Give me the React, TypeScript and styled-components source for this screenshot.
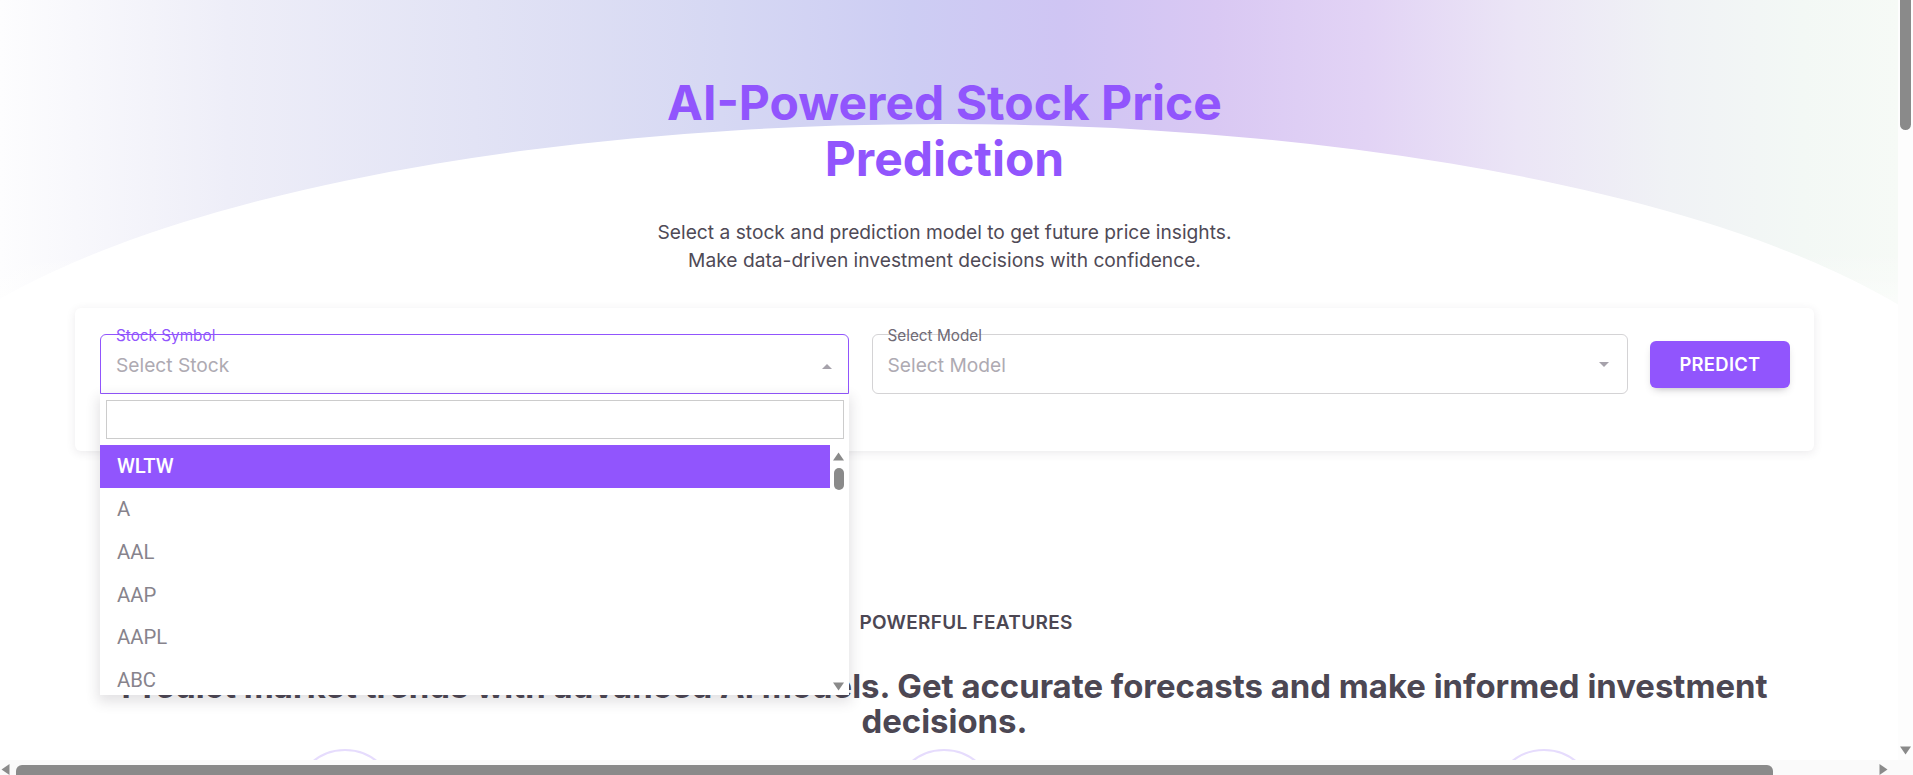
import React from "react";
import styled, { createGlobalStyle } from "styled-components";

const GlobalStyle = createGlobalStyle`
  html, body { margin: 0; padding: 0; }
  body {
    font-family: Inter, "Noto Sans", Arial, sans-serif;
    background: #ffffff;
    color: #3a3541;
  }
  *, *::before, *::after { box-sizing: border-box; }
`;

const Page = styled.div`
  width: calc(100% - 15px);
  display: flex;
  flex-direction: column;
`;

const Hero = styled.section`
  position: relative;
  padding: 75px 84px 0 75px;
  background:
    linear-gradient(180deg, rgba(255,255,255,0) 0%, rgba(255,255,255,0) 70%, #ffffff 100%),
    linear-gradient(90deg, #fdfdfe 0%, #eeeef8 12%, #e2e3f5 25%, #d6d8f3 38%, #cdcdf3 48%, #cfc5f3 56%, #d9c8f3 64%, #e2d3f5 72%, #ebe5f6 80%, #f0f2f5 88%, #f3f8f5 95%, #f6faf6 100%);
  background-size: 100% 360px, 100% 360px;
  background-repeat: no-repeat;

  &::before {
    content: "";
    position: absolute;
    top: 124px;
    left: calc(50% - 1080px);
    width: 2150px;
    height: 670px;
    border-radius: 50%;
    background: #ffffff;
    z-index: 0;
  }
`;

const HeroInner = styled.div`
  position: relative;
  z-index: 2;
  display: flex;
  flex-direction: column;
  align-items: center;
`;

const Title = styled.h1`
  margin: 0;
  max-width: 640px;
  font-size: 48px;
  line-height: 56px;
  font-weight: 700;
  color: #9155fd;
  text-align: center;
`;

const Subtitle = styled.p`
  margin: 30.5px 0 0;
  font-size: 19.2px;
  line-height: 28.8px;
  font-weight: 400;
  color: #4f4a56;
  text-align: center;
`;

const Card = styled.div`
  align-self: stretch;
  margin-top: 33px;
  background: #ffffff;
  border-radius: 6px;
  box-shadow: 0 2px 10px 0 rgba(58, 53, 65, 0.1);
  padding: 26px 24px 57px 25px;
  display: grid;
  grid-template-columns: 749fr 756fr 140px;
  column-gap: 22.5px;
  align-items: center;
`;

const Field = styled.div<{ $focused?: boolean }>`
  position: relative;
  height: 60px;
  border: 1px solid ${(p) => (p.$focused ? "#9155fd" : "rgba(58, 53, 65, 0.22)")};
  border-radius: ${(p) => (p.$focused ? "6px 6px 0 0" : "6px")};
  display: flex;
  align-items: center;
  padding: 0 ${(p) => (p.$focused ? "9px" : "11px")} 0 15px;
`;

const FieldLabel = styled.span<{ $focused?: boolean }>`
  position: absolute;
  top: -7.5px;
  left: 15px;
  font-size: 15.3px;
  line-height: 15.3px;
  color: ${(p) => (p.$focused ? "#9155fd" : "#6f6a75")};
  white-space: nowrap;
`;

const Placeholder = styled.span`
  flex: 1;
  padding-top: 2px;
  font-size: 19.2px;
  color: #aeaab2;
`;

const Caret = styled.svg<{ $dy?: number }>`
  width: 24px;
  height: 24px;
  margin-top: ${(p) => p.$dy ?? 0}px;
  fill: #a6a2ab;
  flex: none;
`;

const Dropdown = styled.div`
  position: absolute;
  top: 100%;
  left: -1px;
  right: -1px;
  margin-top: 1px;
  background: #ffffff;
  box-shadow: 0 5px 12px 2px rgba(58, 53, 65, 0.14);
  padding-top: 6px;
  z-index: 10;
  display: flex;
  flex-direction: column;
`;

const SearchInput = styled.input`
  margin: 0 5px 0 6px;
  height: 39px;
  border: 1px solid #cccccc;
  border-radius: 0;
  outline: none;
  font-family: inherit;
  font-size: 16px;
  padding: 0 8px;
`;

const ListArea = styled.div`
  margin-top: 6px;
  height: 250px;
  display: flex;
`;

const List = styled.ul`
  flex: 1;
  list-style: none;
  margin: 0;
  padding: 0;
  overflow: hidden;
`;

const Option = styled.li<{ $active?: boolean }>`
  height: 42.7px;
  flex: none;
  display: flex;
  align-items: center;
  padding: 0 17px;
  font-family: Roboto, "Liberation Sans", sans-serif;
  font-size: 20.3px;
  font-weight: ${(p) => (p.$active ? 500 : 400)};
  color: ${(p) => (p.$active ? "#ffffff" : "#87838c")};
  background: ${(p) => (p.$active ? "#9155fd" : "transparent")};
`;

const ListScroll = styled.div`
  width: 19px;
  flex: none;
  display: flex;
  flex-direction: column;
  align-items: center;
  padding: 7px 2px 4px 0;
`;

const ListThumb = styled.div`
  width: 10px;
  height: 22px;
  margin-top: 7px;
  border-radius: 5px;
  background: #8a8a8a;
`;

const Spacer = styled.div`
  flex: 1;
`;

const Arrow = styled.svg`
  flex: none;
  fill: #8a8a8a;
`;

const PredictButton = styled.button`
  height: 47px;
  border: none;
  border-radius: 6px;
  background: #9155fd;
  color: #ffffff;
  font-family: inherit;
  font-size: 18.4px;
  font-weight: 600;
  letter-spacing: 0.3px;
  text-transform: uppercase;
  box-shadow: 0 4px 8px -4px rgba(58, 53, 65, 0.42);
  cursor: pointer;
`;

const Section = styled.section<{ $top?: number }>`
  position: relative;
  z-index: 1;
  padding: ${(p) => p.$top ?? 155}px 84px 0 75px;
  display: flex;
  flex-direction: column;
  align-items: center;
`;

const Eyebrow = styled.div<{ $shift?: number }>`
  margin-left: ${(p) => p.$shift ?? 0}px;
  font-size: 19px;
  line-height: 27px;
  font-weight: 600;
  letter-spacing: 0.3px;
  text-transform: uppercase;
  color: #4c4753;
`;

const SectionHeading = styled.h2`
  margin: 33px 0 0;
  font-size: 32.9px;
  line-height: 35.4px;
  font-weight: 700;
  color: #4c4753;
  text-align: center;
`;

const FeatureGrid = styled.div`
  align-self: stretch;
  margin-top: 10px;
  display: grid;
  grid-template-columns: repeat(3, 1fr);
  column-gap: 60px;
  row-gap: 80px;
`;

const Feature = styled.div`
  display: flex;
  flex-direction: column;
  align-items: center;
  text-align: center;
  gap: 18px;
`;

const IconRing = styled.div`
  width: 104px;
  height: 104px;
  border-radius: 50%;
  border: 2px solid #e6dcfd;
  display: flex;
  align-items: center;
  justify-content: center;
  color: #9155fd;
`;

const FeatureTitle = styled.h3`
  margin: 8px 0 0;
  font-size: 22px;
  font-weight: 700;
  color: #4c4753;
`;

const FeatureText = styled.p`
  margin: 0;
  font-size: 16px;
  line-height: 26px;
  color: #6f6a75;
  max-width: 440px;
`;

const Steps = styled.div`
  align-self: stretch;
  margin-top: 60px;
  display: grid;
  grid-template-columns: repeat(4, 1fr);
  gap: 32px;
`;

const StepCard = styled.div`
  background: #ffffff;
  border-radius: 6px;
  box-shadow: 0 2px 10px 0 rgba(58, 53, 65, 0.1);
  padding: 32px 28px;
  min-height: 260px;
  display: flex;
  flex-direction: column;
  gap: 14px;
`;

const StepNumber = styled.span`
  font-size: 40px;
  font-weight: 700;
  color: #9155fd;
`;

const Footer = styled.footer`
  margin-top: 200px;
  padding: 48px 84px 60px 75px;
  border-top: 1px solid #ece9f1;
  display: flex;
  justify-content: space-between;
  color: #8a868f;
  font-size: 15px;
`;

/* browser-like scrollbars drawn over the page edges */
const VScrollbar = styled.div`
  position: fixed;
  top: 0;
  right: 0;
  width: 15px;
  height: calc(100% - 15px);
  background: #fdfdfd;
  z-index: 100;
  display: flex;
  flex-direction: column;
  align-items: center;
  padding: 0 2px 5px 1px;
`;

const VThumb = styled.div`
  width: 11px;
  height: 130px;
  border-radius: 0 0 6px 6px;
  background: #8a8a8a;
`;

const HScrollbar = styled.div`
  position: fixed;
  left: 0;
  bottom: 0;
  height: 15px;
  width: 100%;
  background: #fafafa;
  z-index: 100;
  display: flex;
  align-items: flex-end;
  padding: 0 25px 0 1px;
`;

const HThumb = styled.div`
  height: 10px;
  width: 1757px;
  margin-left: 6px;
  border-radius: 6px 6px 0 0;
  background: #8a8a8a;
`;

const stocks = [
  "WLTW","A","AAL","AAP","AAPL","ABC","ABT","ACN","ADBE","ADI","ADM","ADP","ADS","ADSK","AEE","AEP","AES","AET","AFL","AGN",
  "AIG","AIV","AIZ","AJG","AKAM","ALB","ALGN","ALK","ALL","ALLE","ALXN","AMAT","AMD","AME","AMG","AMGN","AMP","AMT","AMZN","ANDV",
  "ANSS","ANTM","AON","AOS","APA","APC","APD","APH","APTV","ARE","ARNC","ATVI","AVB","AVGO","AVY","AWK","AXP","AYI","AZO","BA",
];

const features = [
  { title: "LSTM Forecasting", text: "Deep recurrent networks learn long-term patterns in historical prices to project future movement." },
  { title: "Multiple Models", text: "Compare predictions across several machine-learning models and choose the one that fits your strategy." },
  { title: "Interactive Charts", text: "Visualize actual and predicted prices side by side with clear, interactive charts." },
  { title: "S&P 500 Coverage", text: "Pick from hundreds of listed companies and get insights in seconds." },
  { title: "Data Driven", text: "Predictions are built on years of daily open, high, low, close and volume data." },
  { title: "Easy to Use", text: "Select a stock, choose a model and press predict. That is all it takes." },
];

const steps = [
  { n: "01", t: "Choose a stock", d: "Search the list of symbols and select the company you want to analyse." },
  { n: "02", t: "Select a model", d: "Pick one of the trained prediction models available on the platform." },
  { n: "03", t: "Run prediction", d: "Press predict and let the model forecast the upcoming prices." },
  { n: "04", t: "Review insights", d: "Study the chart and metrics to make better investment decisions." },
];

const CaretUp = () => (
  <Caret $dy={6} viewBox="0 0 24 24"><path d="M7 14l5-5 5 5z" /></Caret>
);
const CaretDown = () => (
  <Caret viewBox="0 0 24 24"><path d="M7 10l5 5 5-5z" /></Caret>
);

const TriUp = () => (
  <Arrow width="11" height="9" viewBox="0 0 11 9"><path d="M5.5 0.5L11 8.5H0z" /></Arrow>
);
const TriDown = () => (
  <Arrow width="11" height="9" viewBox="0 0 11 9"><path d="M0 0.5h11L5.5 8.5z" /></Arrow>
);
const TriLeft = () => (
  <Arrow width="9" height="11" viewBox="0 0 9 11"><path d="M0.5 5.5L8.5 0v11z" /></Arrow>
);
const TriRight = () => (
  <Arrow width="9" height="11" viewBox="0 0 9 11"><path d="M8.5 5.5L0.5 0v11z" /></Arrow>
);

const ChartIcon = () => (
  <svg width="40" height="40" viewBox="0 0 24 24" fill="none" stroke="currentColor" strokeWidth="2" strokeLinecap="round" strokeLinejoin="round">
    <polyline points="3 17 9 11 13 15 21 7" />
    <polyline points="14 7 21 7 21 14" />
  </svg>
);

export default function App() {
  return (
    <Page>
      <GlobalStyle />
      <Hero>
        <HeroInner>
          <Title>AI-Powered Stock Price Prediction</Title>
          <Subtitle>
            Select a stock and prediction model to get future price insights.
            <br />
            Make data-driven investment decisions with confidence.
          </Subtitle>
          <Card>
            <Field $focused>
              <FieldLabel $focused>Stock Symbol</FieldLabel>
              <Placeholder>Select Stock</Placeholder>
              <CaretUp />
              <Dropdown>
                <SearchInput aria-label="Search stock" />
                <ListArea>
                  <List>
                    {stocks.map((s, i) => (
                      <Option key={s} $active={i === 0}>{s}</Option>
                    ))}
                  </List>
                  <ListScroll>
                    <TriUp />
                    <ListThumb />
                    <Spacer />
                    <TriDown />
                  </ListScroll>
                </ListArea>
              </Dropdown>
            </Field>
            <Field>
              <FieldLabel>Select Model</FieldLabel>
              <Placeholder>Select Model</Placeholder>
              <CaretDown />
            </Field>
            <PredictButton>Predict</PredictButton>
          </Card>
        </HeroInner>
      </Hero>

      <Section $top={157.5}>
        <Eyebrow $shift={43}>Powerful Features</Eyebrow>
        <SectionHeading>
          Predict market trends with advanced AI models. Get accurate forecasts and make informed investment decisions.
        </SectionHeading>
        <FeatureGrid>
          {features.map((f) => (
            <Feature key={f.title}>
              <IconRing><ChartIcon /></IconRing>
              <FeatureTitle>{f.title}</FeatureTitle>
              <FeatureText>{f.text}</FeatureText>
            </Feature>
          ))}
        </FeatureGrid>
      </Section>

      <Section>
        <Eyebrow>How It Works</Eyebrow>
        <SectionHeading>Four simple steps from raw market data to a clear price forecast.</SectionHeading>
        <Steps>
          {steps.map((s) => (
            <StepCard key={s.n}>
              <StepNumber>{s.n}</StepNumber>
              <FeatureTitle>{s.t}</FeatureTitle>
              <FeatureText>{s.d}</FeatureText>
            </StepCard>
          ))}
        </Steps>
      </Section>

      <Footer>
        <span>© 2024 Stock Price Prediction</span>
        <span>Built with machine learning</span>
      </Footer>

      <VScrollbar aria-hidden>
        <VThumb />
        <Spacer />
        <TriDown />
      </VScrollbar>
      <HScrollbar aria-hidden>
        <TriLeft />
        <HThumb />
        <Spacer />
        <TriRight />
      </HScrollbar>
    </Page>
  );
}
